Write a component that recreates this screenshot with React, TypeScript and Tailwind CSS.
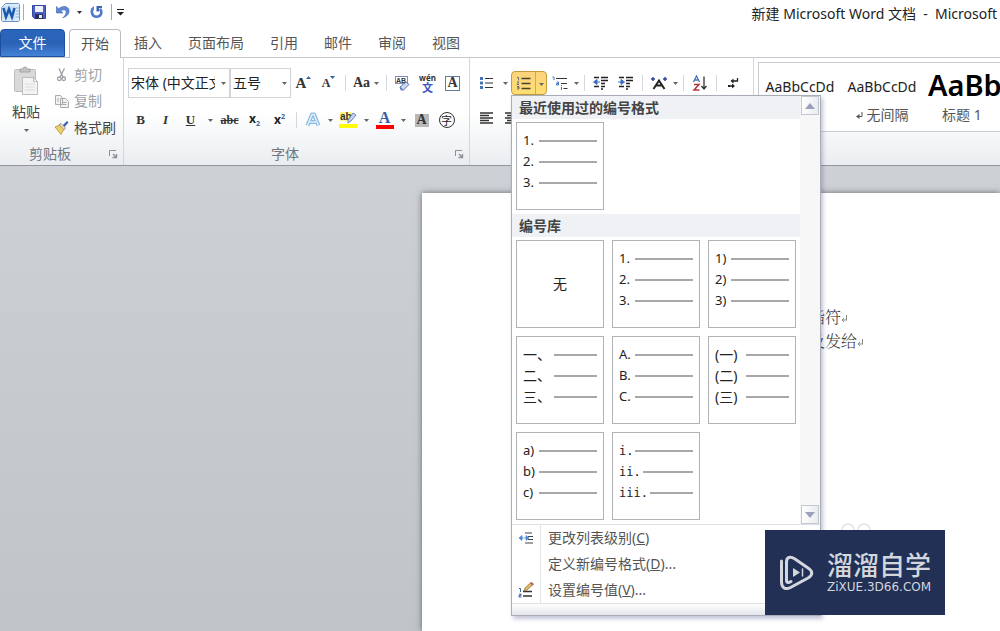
import type { ReactNode } from 'react';

const serif = "font-['Liberation_Serif',serif] font-bold text-[#333]";

function Caret({ className = 'w-3' }: { className?: string }) {
  return (
    <button type="button" aria-label="更多选项" className={`flex h-6 shrink-0 items-center justify-center ${className}`}>
      <svg width="5" height="3" viewBox="0 0 5 3"><path d="M0 0h5L2.500 3z" fill="#666" /></svg>
    </button>
  );
}

function Tool({ label, children, className = 'w-[25px]' }: { label: string; children: ReactNode; className?: string }) {
  return (
    <button type="button" aria-label={label} className={`flex h-6 shrink-0 items-center justify-center ${className}`}>
      {children}
    </button>
  );
}

function Sep({ className = 'w-2' }: { className?: string }) {
  return (
    <span className={`flex shrink-0 justify-center ${className}`}>
      <span className="h-4 w-px bg-[#d5d8dc]" />
    </span>
  );
}

function GroupLabel({ children }: { children: ReactNode }) {
  return (
    <div className="mb-px mt-auto flex h-5 items-center pr-1">
      <span className="flex-1 pr-2 text-center text-sm text-[#72777e]">{children}</span>
      <button type="button" aria-label="打开对话框">
        <svg width="11" height="10" viewBox="0 0 11 10" fill="none" stroke="#8b9097">
          <path d="M1.500 7V1.500H8" />
          <path d="M5 5l3.500 3.500M8.500 5v3.500h-4" strokeWidth="1.400" />
        </svg>
      </button>
    </div>
  );
}

/* Quick access bar */

function WordLogo() {
  return (
    <svg width="19" height="19" viewBox="0 0 19 19">
      <path d="M4.500 0.500h13l1 1v16l-1 1H1.500l-1-1v-13z" fill="#dcebf9" stroke="#6b93c6" />
      <path d="M15 5h3M15 8h3M15 11h3M15 14h3" stroke="#8db3de" />
      <rect x="1.500" y="3.500" width="13" height="12" fill="#c4dcf4" />
      <path d="M2.500 5l2.500 9 3-8 3 8 2.500-9" fill="none" stroke="#1c59ad" strokeWidth="2.500" />
    </svg>
  );
}

function SaveIcon() {
  return (
    <svg width="14" height="14" viewBox="0 0 14 14">
      <path d="M0.500 0.500h13v13h-11l-2-2z" fill="#4c5fc4" stroke="#3744a0" />
      <rect x="3" y="1" width="8" height="6" fill="#eef1fb" />
      <rect x="3" y="9" width="8" height="5" fill="#2b2f5c" />
      <rect x="7" y="10" width="3" height="3" fill="#e8ebf7" />
    </svg>
  );
}

function UndoIcon() {
  return (
    <svg width="14" height="14" viewBox="0 0 14 14">
      <path d="M0.500 1.500v6.500h6.500L4.800 6C8 3.500 11 5 10 8c-.4 1.800-1.500 3.200-3.200 4.800C11 11.500 13.500 8.500 13 5.200 12.200.8 6.500.2 2.700 3.800z" fill="#5f88d4" stroke="#3c62b4" strokeWidth=".6" />
    </svg>
  );
}

function RedoIcon() {
  return (
    <svg width="13" height="14" viewBox="0 0 13 14">
      <path d="M3 3.500C.8 6 1.800 11.800 6.500 11.800c5 0 6-5 3.500-8" fill="none" stroke="#4d78cc" strokeWidth="2.600" />
      <path d="M6.500 1H12v2H9v3.500H6.500z" fill="#3c62b4" />
      <path d="M0.500 4L4 1v4.500z" fill="#5f88d4" />
    </svg>
  );
}

function TitleBar() {
  return (
    <header className="flex h-7 items-center pb-1 pl-px pr-[3px]">
      <WordLogo />
      <span className="ml-[3px] h-4 w-px bg-[#aaa]" />
      <button type="button" aria-label="保存" className="ml-2"><SaveIcon /></button>
      <button type="button" aria-label="撤消" className="ml-2.5"><UndoIcon /></button>
      <Caret className="ml-[3px] w-3 brightness-50" />
      <button type="button" aria-label="重复" className="ml-[5px]"><RedoIcon /></button>
      <span className="ml-2 h-4 w-px bg-[#aaa]" />
      <button type="button" aria-label="自定义快速访问工具栏" className="ml-[5px]">
        <svg width="7" height="7" viewBox="0 0 7 7"><path d="M0 0h7v1H0zM0 3h7L3.500 6.500z" fill="#222" /></svg>
      </button>
      <h1 className="ml-auto mt-1 whitespace-nowrap text-sm text-[#222]">新建 Microsoft Word 文档&nbsp; -&nbsp; Microsoft</h1>
    </header>
  );
}

const tabs = ['插入', '页面布局', '引用', '邮件', '审阅', '视图'];

function TabStrip() {
  return (
    <nav className="flex h-[30px] items-stretch border-b border-[#c5c8cc] pt-px text-sm text-[#555]">
      <button type="button" className="w-[65px] rounded-t-sm border border-[#1d4f9f] bg-linear-to-b from-[#2a66bd] via-[#2b62b6] to-[#4383d6] text-white">文件</button>
      <button type="button" className="-mb-px ml-1 w-[52px] rounded-t-sm border border-b-0 border-[#b9bdc2] bg-white">开始</button>
      {tabs.map((t) => (
        <button key={t} type="button" className="px-[13px]">{t}</button>
      ))}
    </nav>
  );
}

/* Ribbon groups */

function ClipboardGroup() {
  return (
    <section className="flex w-[124px] shrink-0 flex-col border-r border-[#d3d6da]">
      <div className="flex pt-[3px]">
        <button type="button" className="flex w-[52px] flex-col items-center pt-[5px] text-sm text-[#444]">
          <svg width="26" height="30" viewBox="0 0 26 30">
            <rect x="1.500" y="3.500" width="21" height="22" rx="1" fill="#d9d9da" stroke="#bcbcbe" />
            <path d="M7 5V3h3a2 2 0 014 0h3v3H7z" fill="#c3c3c5" stroke="#a4a4a6" />
            <path d="M9.500 11.500h11l4 4v13h-15z" fill="#f3f3f4" stroke="#bdbdbf" />
            <path d="M20.500 11.500v4h4" fill="none" stroke="#bdbdbf" />
            <path d="M12 18h10M12 21h10M12 24h10" stroke="#dcdcde" />
          </svg>
          <span className="mt-1.5 leading-5">粘贴</span>
          <svg className="mt-[7px]" width="5" height="3" viewBox="0 0 5 3"><path d="M0 0h5L2.500 3z" fill="#666" /></svg>
        </button>
        <div className="flex flex-col text-sm text-[#a0a3a7]">
          <button type="button" className="flex h-[27px] items-center gap-1">
            <svg width="18" height="14" viewBox="0 0 18 14" fill="none" stroke="#9b9ea2" strokeWidth="1.300">
              <path d="M7 0.500l4 8.500M12.500 0.500L8 9" />
              <circle cx="7.300" cy="10.800" r="1.800" /><circle cx="11.700" cy="10.800" r="1.800" />
            </svg>
            剪切
          </button>
          <button type="button" className="flex h-[26px] items-center gap-1">
            <svg width="18" height="14" viewBox="0 0 18 14" fill="#f2f2f3" stroke="#a9abae">
              <path d="M3.500 1.500h5l2 2v7h-7zM8.500 4.500h5l3 3v6h-8z" />
              <path d="M5 5h2M5 7h2M10.500 8.500h4M10.500 10.500h4" />
            </svg>
            复制
          </button>
          <button type="button" className="flex h-[27px] items-center gap-1 text-[#444]">
            <svg width="18" height="14" viewBox="0 0 18 14">
              <path d="M3 6l5-2 4 4-3 5.500z" fill="#f0d264" stroke="#a8872c" strokeWidth=".7" />
              <path d="M7 3.500l2-1 4.500 4.500-1.500 2z" fill="#e9e2c0" stroke="#7d7d7d" strokeWidth=".7" />
              <path d="M11 4l4-4 1.500 1.500-4 4.500z" fill="#3e5da8" />
            </svg>
            格式刷
          </button>
        </div>
      </div>
      <GroupLabel>剪贴板</GroupLabel>
    </section>
  );
}

function Combo({ label, value, className }: { label: string; value: string; className: string }) {
  return (
    <div className={`relative h-[30px] ${className}`}>
      <select aria-label={label} className="h-full w-full appearance-none border border-[#d0d3d7] bg-white pl-0.5 pr-3.5 text-sm text-[#222]">
        <option>{value}</option>
      </select>
      <svg className="pointer-events-none absolute right-1 top-3.5" width="5" height="3" viewBox="0 0 5 3"><path d="M0 0h5L2.500 3z" fill="#666" /></svg>
    </div>
  );
}

function FontGroup() {
  return (
    <section className="flex w-[346px] shrink-0 flex-col border-r border-[#d3d6da] pt-2.5">
      <div className="flex h-[30px] items-center pl-1">
        <Combo label="字体" value="宋体 (中文正文)" className="w-[102px]" />
        <Combo label="字号" value="五号" className="w-[61px]" />
        <Tool label="增大字体">
          <span className={`${serif} text-[15px]`}>A</span>
          <svg className="mb-3" width="5" height="3" viewBox="0 0 5 3"><path d="M0 3h5L2.500 0z" fill="#35649f" /></svg>
        </Tool>
        <Tool label="缩小字体">
          <span className={`${serif} text-xs`}>A</span>
          <svg className="mb-3" width="5" height="3" viewBox="0 0 5 3"><path d="M0 0h5L2.500 3z" fill="#35649f" /></svg>
        </Tool>
        <Sep />
        <Tool label="更改大小写" className="w-[21px] pl-1"><span className={`${serif} text-sm`}>Aa</span></Tool>
        <Caret />
        <Sep />
        <Tool label="清除格式">
          <svg width="17" height="17" viewBox="0 0 17 17">
            <rect x="1.500" y="1.500" width="12" height="7" fill="#fff" stroke="#7a8fb8" />
            <text x="2" y="8" fontSize="7" fontWeight="bold" fontFamily="Liberation Sans" fill="#333">AB</text>
            <path d="M6 12l6-5 3 2.500-5.500 5.500H7z" fill="#cdd9f0" stroke="#5e7ab8" />
            <path d="M6 12l3.500 3" stroke="#5e7ab8" />
          </svg>
        </Tool>
        <Tool label="拼音指南">
          <span className="flex flex-col items-center">
            <span className="text-[8px] font-bold leading-[8px] text-[#333]">wén</span>
            <span className="text-[11px] font-bold leading-[11px] text-[#3b55c4]">文</span>
          </span>
        </Tool>
        <Tool label="字符边框"><span className={`${serif} flex size-[15px] items-center justify-center border border-[#667a99] text-sm leading-none`}>A</span></Tool>
      </div>
      <div className="mt-[7px] flex h-[30px] items-center pl-1">
        <Tool label="加粗"><span className={`${serif} text-[13px]`}>B</span></Tool>
        <Tool label="倾斜"><span className={`${serif} text-[13px] italic`}>I</span></Tool>
        <Tool label="下划线"><span className={`${serif} text-[13px] underline`}>U</span></Tool>
        <Caret className="w-3.5" />
        <Tool label="删除线"><span className={`${serif} text-xs line-through`}>abc</span></Tool>
        <Tool label="下标"><span className="text-xs font-bold text-[#222]">x<span className="align-[-3px] text-[7px] text-[#35649f]">2</span></span></Tool>
        <Tool label="上标"><span className="text-xs font-bold text-[#222]">x<span className="align-[5px] text-[7px] text-[#35649f]">2</span></span></Tool>
        <Sep className="w-2" />
        <Tool label="文本效果">
          <svg width="16" height="16" viewBox="0 0 16 16" fill="none" strokeLinejoin="round">
            <path d="M2.500 13.500L7 2.500h2l4.500 11M5 10h6" stroke="#86bbe4" strokeWidth="4" />
            <path d="M2.500 13.500L7 2.500h2l4.500 11M5 10h6" stroke="#e3f1fb" strokeWidth="1.500" />
          </svg>
        </Tool>
        <Caret className="w-2.5" />
        <Tool label="突出显示颜色">
          <svg width="20" height="20" viewBox="0 0 20 20">
            <rect x="2" y="2" width="12" height="9" fill="#fff685" />
            <text x="2" y="10" fontSize="10" fontWeight="bold" fontFamily="Liberation Sans" fill="#333">ab</text>
            <path d="M10 10l5-7 3 2-5 6-3 2z" fill="#c5d2ec" stroke="#516da6" strokeWidth=".8" />
            <rect x="1" y="14" width="18" height="4" fill="#ffff00" />
          </svg>
        </Tool>
        <Caret />
        <Tool label="字体颜色">
          <span className="flex flex-col items-center">
            <span className="font-['Liberation_Serif',serif] text-base font-bold leading-[14px] text-[#395e9e]">A</span>
            <span className="h-1 w-[18px] bg-[#f00]" />
          </span>
        </Tool>
        <Caret />
        <Tool label="字符底纹"><span className={`${serif} flex h-[13px] w-3.5 items-center justify-center bg-[#b8b8b8] text-sm`}>A</span></Tool>
        <Tool label="带圈字符"><span className="flex size-4 items-center justify-center rounded-full border border-[#333] text-[11px] leading-none text-[#222]">字</span></Tool>
      </div>
      <GroupLabel>字体</GroupLabel>
    </section>
  );
}

function IndentIcon({ flip = false }: { flip?: boolean }) {
  return (
    <svg width="16" height="14" viewBox="0 0 16 14">
      <path d="M1 1.500h5M8 1.500h7M8 4.500h7M8 7.500h4M1 10.500h5M8 10.500h4M8 13h2" stroke="#222" strokeWidth="1.600" />
      <path d={flip ? 'M0 6h4M3 3.500L6.500 6 3 8.500z' : 'M2 6h5M4 3.500L0.500 6 4 8.500z'} fill="#3d6cc0" stroke="#3d6cc0" />
    </svg>
  );
}

function ParagraphGroup() {
  return (
    <section className="flex w-[284px] shrink-0 flex-col border-r border-[#d3d6da] pt-2.5">
      <div className="flex h-[30px] items-center pl-1">
        <Tool label="项目符号">
          <svg width="14" height="12" viewBox="0 0 14 12">
            <path d="M0 0h3v3H0zM0 4.500h3v3H0zM0 9h3v3H0z" fill="#4674b9" />
            <path d="M5 1.500h8M5 6h8M5 10.500h8" stroke="#333" strokeWidth="1.200" />
          </svg>
        </Tool>
        <Caret />
        <div className="relative flex h-6 w-9 shrink-0 rounded-sm border border-[#c79a3c] bg-linear-to-b from-[#fbd37c] to-[#ffdf72]">
          <button type="button" aria-label="编号" aria-expanded="true" className="flex flex-1 items-center justify-center border-r border-[#d8a84a]">
            <svg width="15" height="13" viewBox="0 0 15 13">
              <path d="M1 0.500h1.500v3M1 5h2L1 7.500h2M1 9.500h2v1.200H1.500H3V12H1" fill="none" stroke="#6b6f80" />
              <path d="M5.500 1.500h9M5.500 6.500h9M5.500 11.500h9" stroke="#4a4230" strokeWidth="1.400" />
            </svg>
          </button>
          <Caret className="w-2.5" />
          <NumberingMenu />
        </div>
        <Tool label="多级列表">
          <svg width="16" height="15" viewBox="0 0 16 15">
            <path d="M0.500 1h1.500v3M4.500 6h2v3h-2V7.500h2M9.500 11v3M9.500 9v1" fill="none" stroke="#4674b9" />
            <path d="M4 2.500h11M9 7.500h6M11.500 12.500h4" stroke="#333" strokeWidth="1.200" />
          </svg>
        </Tool>
        <Caret className="w-2" />
        <Sep />
        <Tool label="减少缩进量"><IndentIcon /></Tool>
        <Tool label="增加缩进量"><IndentIcon flip /></Tool>
        <Sep />
        <Tool label="中文版式">
          <svg width="18" height="14" viewBox="0 0 18 14">
            <path d="M3.500 13L9 4.500l5.500 8.500M6 9.500h6" fill="none" stroke="#222" strokeWidth="2" />
            <path d="M1 3h4M3 1v4M13 3h4M15 1v4" stroke="#34479d" strokeWidth="1.500" />
          </svg>
        </Tool>
        <Caret className="w-2" />
        <Sep />
        <Tool label="排序">
          <svg width="16" height="17" viewBox="0 0 16 17" fill="none">
            <path d="M1.500 7L4.500 1l3 6M2.500 5h4" stroke="#4674b9" strokeWidth="1.300" />
            <path d="M2 9.500h5L2 15h5.500" stroke="#b3343c" strokeWidth="1.500" />
            <path d="M12 1.500v12M9.500 11l2.500 3 2.500-3" stroke="#333" strokeWidth="1.300" />
          </svg>
        </Tool>
        <Sep />
        <Tool label="显示编辑标记">
          <svg width="12" height="13" viewBox="0 0 12 13">
            <path d="M10.500 1v3H6M6 9H1.500" fill="none" stroke="#222" strokeWidth="1.300" />
            <path d="M6.500 1.500v5L3.500 4zM5 6.500v5L8 9zM1 8v2h2V8z" fill="#222" />
          </svg>
        </Tool>
      </div>
      <div className="mt-[5px] flex h-[30px] items-center pl-1">
        <Tool label="左对齐">
          <svg width="14" height="12" viewBox="0 0 14 12"><path d="M0 1h13M0 3.500h9M0 6h13M0 8.500h9M0 11h13" stroke="#333" strokeWidth="1.300" /></svg>
        </Tool>
        <Tool label="居中">
          <svg width="14" height="12" viewBox="0 0 14 12"><path d="M0 1h13M2 3.500h9M0 6h13M2 8.500h9M0 11h13" stroke="#333" strokeWidth="1.300" /></svg>
        </Tool>
      </div>
    </section>
  );
}

function StylesGroup() {
  return (
    <section className="min-w-0 flex-1 pl-1 pt-1">
      <div className="flex h-[70px] items-start overflow-hidden border border-r-0 border-[#c9ccd0] bg-white text-sm">
        <button type="button" aria-label="正文" className="w-[82px] shrink-0 pt-3.5 text-center leading-5 text-[#222]">AaBbCcDd</button>
        <button type="button" className="flex w-[82px] shrink-0 flex-col items-center pt-3.5 text-[#222]">
          <span className="leading-5">AaBbCcDd</span>
          <span className="mt-2 flex items-center gap-1 leading-5 text-[#555]">
            <svg width="7" height="7" viewBox="0 0 7 7"><path d="M6 0v4.500H2.500" fill="none" stroke="#555" /><path d="M3.500 2v5L0 4.500z" fill="#555" /></svg>
            无间隔
          </span>
        </button>
        <button type="button" className="flex w-[82px] shrink-0 flex-col pl-[5px] pt-1.5 text-left text-black">
          <span className="text-[29px] font-semibold leading-8">AaBb</span>
          <span className="mt-1 pl-3.5 leading-5 text-[#555]">标题 1</span>
        </button>
      </div>
    </section>
  );
}

/* Numbering drop-down */

type Format = { rows: [string, string][]; font?: string };

const arabic: Format = { rows: [['1.', 'w-4'], ['2.', 'w-4'], ['3.', 'w-4']] };

const library: Format[] = [
  arabic,
  { rows: [['1)', 'w-4'], ['2)', 'w-4'], ['3)', 'w-4']] },
  { rows: [['一、', 'w-[31px]'], ['二、', 'w-[31px]'], ['三、', 'w-[31px]']], font: 'text-sm' },
  { rows: [['A.', 'w-4'], ['B.', 'w-4'], ['C.', 'w-4']] },
  { rows: [['(一)', 'w-[31px]'], ['(二)', 'w-[31px]'], ['(三)', 'w-[31px]']], font: 'text-sm' },
  { rows: [['a)', 'w-4'], ['b)', 'w-4'], ['c)', 'w-4']] },
  {
    rows: [['i.', 'w-4'], ['ii.', 'w-6'], ['iii.', 'w-[31px]']],
    font: "font-['DejaVu_Sans_Mono',monospace] text-xs",
  },
];

function FormatCard({ rows, font = 'text-[13px]' }: Format) {
  return (
    <button type="button" className={`flex size-22 flex-col border border-[#b1b3b6] bg-white px-1.5 pt-[7px] text-left text-[#222] ${font}`}>
      {rows.map(([text, width]) => (
        <span key={text} className="flex h-[21px] w-full items-center">
          <span className={`shrink-0 whitespace-nowrap ${width}`}>{text}</span>
          <span className="h-0.5 flex-1 bg-[#a8a8a8]" />
        </span>
      ))}
    </button>
  );
}

function MenuHeading({ children }: { children: ReactNode }) {
  return <h2 className="flex h-[23px] items-center bg-[#eff1f5] pl-[7px] text-sm font-bold text-[#444]">{children}</h2>;
}

function MenuItem({ icon, text, accessKey, more = '' }: { icon?: ReactNode; text: string; accessKey: string; more?: string }) {
  return (
    <button type="button" className="flex h-[26px] w-full items-center">
      <span className="flex h-full w-[29px] items-center justify-center border-r border-[#e3e5e8]">{icon}</span>
      <span className="pl-[7px] text-sm text-[#555]">{text}(<u>{accessKey}</u>){more}</span>
    </button>
  );
}

function ScrollArrow({ up = false }: { up?: boolean }) {
  return (
    <button type="button" aria-label={up ? '向上滚动' : '向下滚动'} className="flex h-[19px] w-[18px] items-center justify-center border border-[#c3c7d0] bg-linear-to-r from-white to-[#e9ebf0]">
      <svg width="10" height="6" viewBox="0 0 10 6"><path d={up ? 'M0 6h10L5 0z' : 'M0 0h10L5 6z'} fill="#9aa0bd" /></svg>
    </button>
  );
}

function NumberingMenu() {
  return (
    <div className="absolute -left-px top-[23px] z-20 w-[310px] border border-[#a9adb8] bg-white shadow-[2px_3px_4px_rgba(90,90,150,0.35)]">
      <div className="flex border-b border-[#dfe1e4]">
        <div className="flex-1">
          <MenuHeading>最近使用过的编号格式</MenuHeading>
          <div className="px-1 pb-1 pt-[3px]">
            <FormatCard {...arabic} />
          </div>
          <MenuHeading>编号库</MenuHeading>
          <div className="flex flex-wrap gap-2 px-1 pb-1 pt-[3px]">
            <button type="button" className="size-22 border border-[#b1b3b6] bg-white text-sm text-[#222]">无</button>
            {library.map((f) => (
              <FormatCard key={f.rows[0][0]} {...f} />
            ))}
          </div>
        </div>
        <div className="flex w-5 flex-col items-center justify-between bg-[#f7f7f8]">
          <ScrollArrow up />
          <ScrollArrow />
        </div>
      </div>
      <div>
        <MenuItem
          text="更改列表级别"
          accessKey="C"
          icon={
            <svg width="15" height="12" viewBox="0 0 15 12">
              <path d="M6 1h7M9 4.500h5M9 7.500h5M6 11h8" stroke="#444" strokeWidth="1.200" />
              <path d="M2 6h6M3 3.500L0 6l3 2.500zM7 3.500L10 6 7 8.500z" fill="#4f86d0" stroke="#4f86d0" strokeWidth=".7" />
            </svg>
          }
        />
        <MenuItem text="定义新编号格式" accessKey="D" more="..." />
        <MenuItem
          text="设置编号值"
          accessKey="V"
          more="..."
          icon={
            <svg width="16" height="16" viewBox="0 0 16 16">
              <path d="M1 6.500h1.500V10M1 12h2v1.500H1V15h2.500" fill="none" stroke="#35649f" />
              <path d="M5 9.500h9M5 14h9" stroke="#333" strokeWidth="1.300" />
              <path d="M6 9l1-3 6-5.500 2 2L9 8z" fill="#e3b566" stroke="#8a6a34" strokeWidth=".7" />
              <path d="M12 1.500L13.500 0 16 2l-1.500 1.500z" fill="#c25d52" />
            </svg>
          }
        />
      </div>
      <div className="h-3 border-t border-[#dfe1e4] bg-linear-to-b from-white to-[#e2e5ea]" />
    </div>
  );
}

function ReturnMark() {
  return (
    <svg className="inline" width="6" height="8" viewBox="0 0 6 8" fill="none" stroke="#888"><path d="M5.500 0v5H1M3 3L1 5l2 2" /></svg>
  );
}

function Watermark() {
  return (
    <aside className="absolute bottom-4 right-[55px] z-30 flex h-[85px] w-[180px] items-center gap-3 bg-[#223056] pl-3.5 text-[#d3d6dd]">
      <svg className="shrink-0" width="36" height="36" viewBox="0 0 36 36" fill="none" stroke="currentColor" strokeLinecap="round">
        <path d="M2.500 6v21c0 6 4 8 9 5.500L29 23c5-3 5-7 0-10L16 4C11 1 7.500 2 7.500 7v18c0 3 2 3 4.500 1.500" strokeWidth="3" />
        <path d="M14 13v9l7-4.500z" fill="currentColor" stroke="none" />
        <path d="M23.500 14v7" strokeWidth="1.500" />
      </svg>
      <div className="flex flex-col">
        <span className="text-[26px] font-medium leading-7">溜溜自学</span>
        <span className="font-['DejaVu_Sans',sans-serif] text-xs leading-4">ZiXUE.3D66.COM</span>
      </div>
    </aside>
  );
}

export default function App() {
  return (
    <div className="relative flex min-h-screen flex-col overflow-hidden bg-white font-['Noto_Sans','Noto_Sans_CJK_SC',sans-serif]">
      <TitleBar />
      <TabStrip />
      <div className="flex h-[108px] border-b border-[#92979e] bg-linear-to-b from-white from-50% to-[#eaedf0]">
        <ClipboardGroup />
        <FontGroup />
        <ParagraphGroup />
        <StylesGroup />
      </div>
      <main className="flex flex-1 bg-linear-to-b from-[#cdd0d5] to-[#c0c4c9] pt-[27px]">
        <article className="ml-[422px] flex-1 bg-white pl-[387px] pt-28 font-['Noto_Serif_CJK_SC','Noto_Sans_CJK_SC',serif] text-base font-light leading-6 text-[#333] shadow-[0_0_6px_rgba(0,0,0,0.5)]">
          <p>指符<ReturnMark /></p>
          <p className="whitespace-nowrap">及发给<ReturnMark /></p>
          <svg className="ml-8 mt-[170px]" width="32" height="16" viewBox="0 0 32 16" fill="none" stroke="#e2e2e4" strokeWidth="1.500">
            <circle cx="7" cy="7" r="6" /><circle cx="23" cy="7" r="6" />
          </svg>
        </article>
      </main>
      <Watermark />
    </div>
  );
}
